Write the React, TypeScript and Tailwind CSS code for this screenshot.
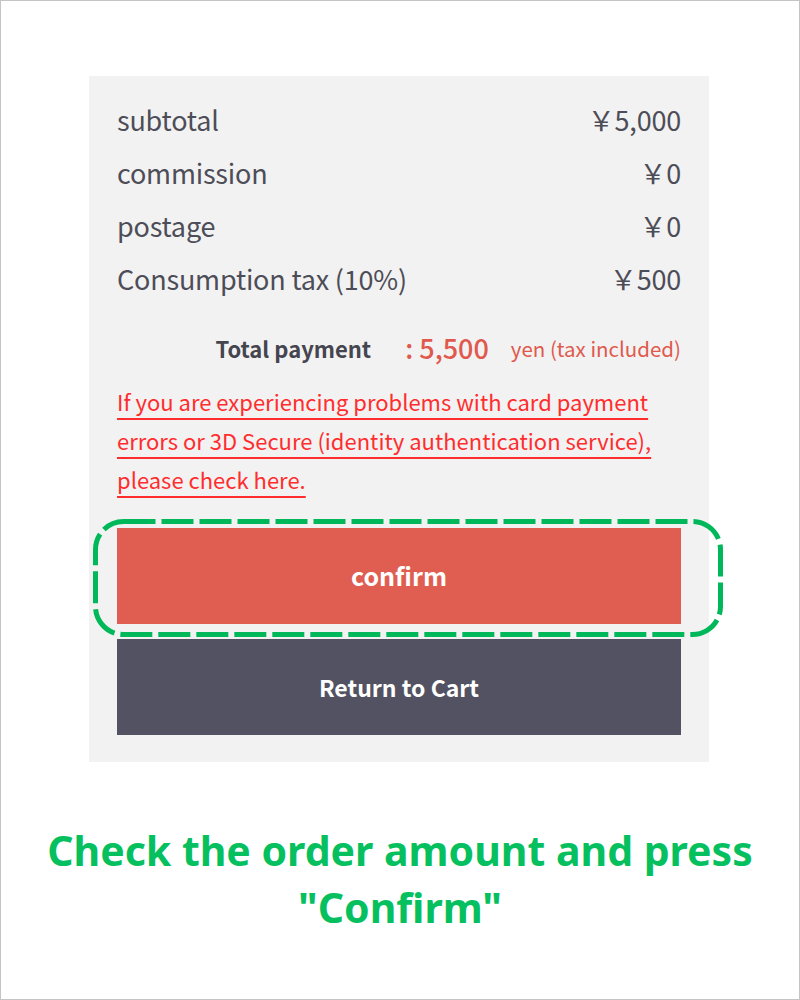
const ROWS = [
  { label: "subtotal", value: "￥5,000" },
  { label: "commission", value: "￥0" },
  { label: "postage", value: "￥0" },
  { label: "Consumption tax (10%)", value: "￥500" },
];

const PANEL_FONT = { fontFamily: '"Noto Sans CJK JP", "Noto Sans", sans-serif' };

export default function App() {
  return (
    <div className="w-[800px] h-[1000px] border border-[#c4c4c4] bg-white flex flex-col">
      {/* Order summary panel */}
      <div
        className="ml-[88px] mt-[75px] w-[620px] h-[686px] bg-[#f2f2f2] px-[28px] pt-[18px] text-[#4d4d58]"
        style={PANEL_FONT}
      >
        {ROWS.map((r) => (
          <div
            key={r.label}
            className="flex items-center justify-between h-[53px] text-[27px] tracking-[-0.2px]"
          >
            <span>{r.label}</span>
            <span>{r.value}</span>
          </div>
        ))}

        <div className="mt-[22px] h-[40px] flex items-center justify-end">
          <span className="text-[22px] font-bold text-[#45454f]">Total payment</span>
          <span className="ml-[34px] text-[27px] font-medium text-[#e0594d]">: 5,500</span>
          <span className="ml-[22px] text-[20.5px] text-[#e0594d]">yen (tax included)</span>
        </div>

        <p className="mt-[14px] text-[22px] leading-[39px] text-[#ff2d2d]">
          <span className="underline decoration-2 underline-offset-[7px]">
            If you are experiencing problems with card payment
            <br />
            errors or 3D Secure (identity authentication service),
            <br />
            please check here.
          </span>
        </p>

        {/* Buttons */}
        <div className="mt-[29px] flex flex-col gap-[15px]">
          <div className="relative">
            <button className="w-full h-[96px] bg-[#e05e51] text-white text-[25px] font-bold">
              confirm
            </button>
            <svg
              className="absolute left-[-24px] top-[-9px] pointer-events-none"
              width="630"
              height="118"
              viewBox="0 0 630 118"
            >
              <rect
                x="2.5"
                y="2.5"
                width="625"
                height="113"
                rx="28"
                fill="none"
                stroke="#00b85a"
                strokeWidth="5"
                strokeDasharray="32 6"
              />
            </svg>
          </div>
          <button className="w-full h-[96px] bg-[#535262] text-white text-[23px] font-bold">
            Return to Cart
          </button>
        </div>
      </div>

      {/* Caption */}
      <p
        className="mt-[60px] text-center text-[41px] leading-[57px] font-bold text-[#06c060]"
        style={{ fontFamily: '"Noto Sans", sans-serif' }}
      >
        Check the order amount and press
        <br />
        "Confirm"
      </p>
    </div>
  );
}
